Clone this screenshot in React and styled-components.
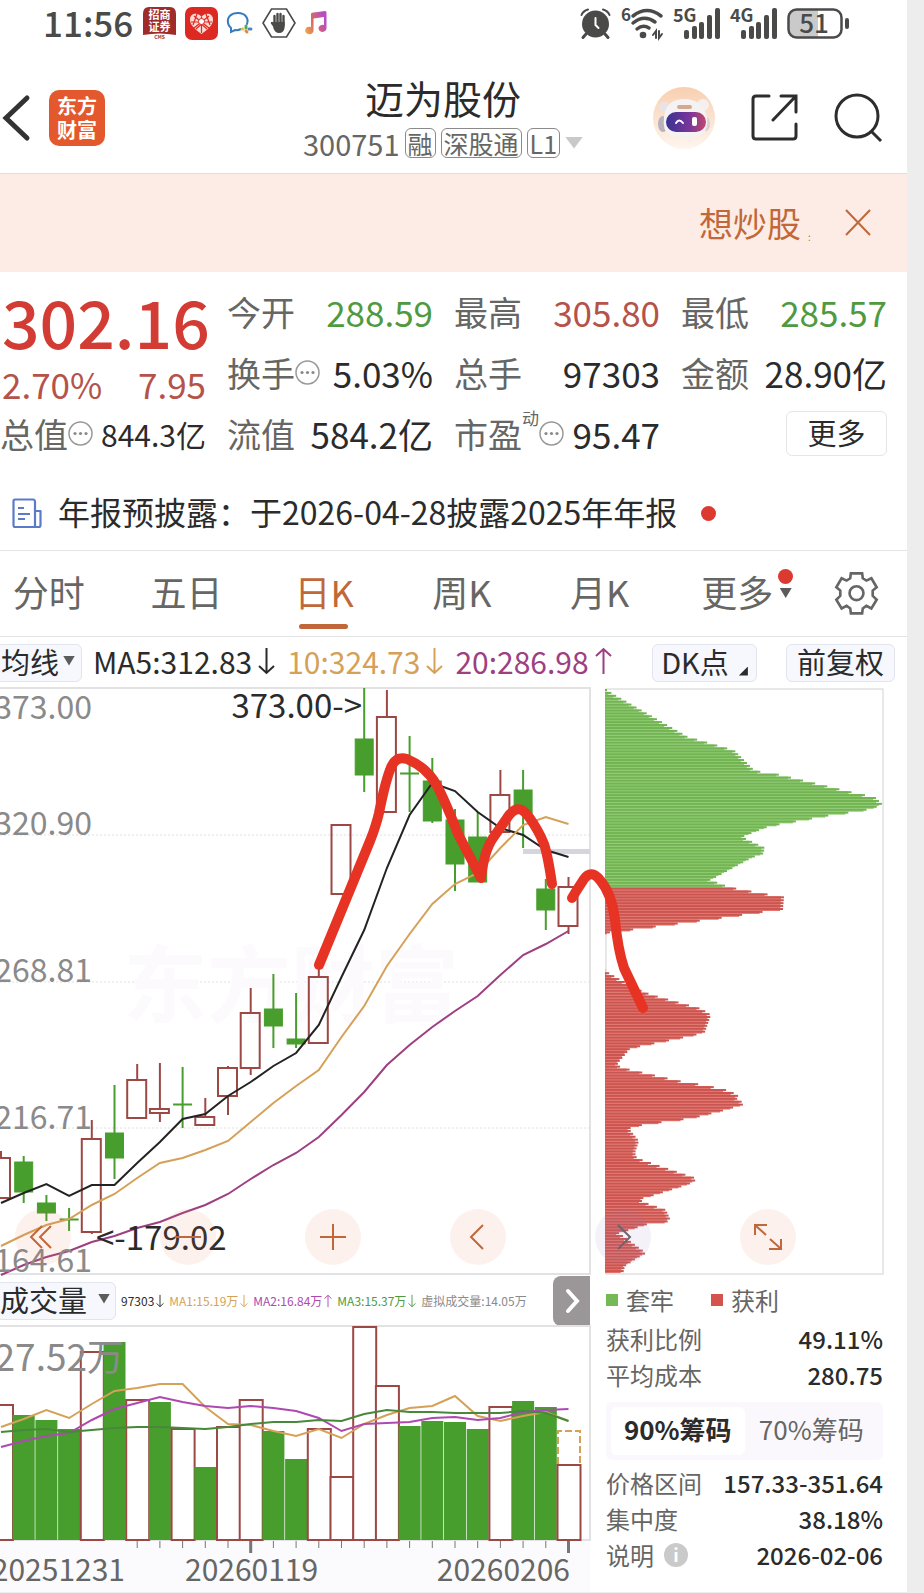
import React from "react"
import styled, { createGlobalStyle, css } from "styled-components"

const colors = {
  ink: "#2b2b2b",
  gray: "#666664",
  muted: "#8a8a8a",
  up: "#b5524a",
  upStrong: "#d23c34",
  down: "#4f9a41",
  candleGreen: "#479e2c",
  candleRed: "#9c4844",
  accent: "#c0683a",
  gold: "#d5a158",
  plum: "#9d3f81",
  violet: "#ad49b0",
  line: "#e4e4e6",
}

const GlobalStyle = createGlobalStyle`
  * {
    box-sizing: border-box;
  }
  body {
    margin: 0;
    background: #ededed;
    color: ${colors.ink};
    font-family: "Noto Sans CJK SC", "Noto Sans", sans-serif;
  }
  button,
  select {
    padding: 0;
    border: 0;
    background: none;
    color: inherit;
    font: inherit;
    cursor: pointer;
  }
  dl,
  dd,
  h1,
  p {
    margin: 0;
    font-weight: 400;
  }
  svg {
    display: block;
    flex: none;
    overflow: visible;
  }
`

const Screen = styled.main`
  margin-right: 17px; // gray gutter on the right side
  background: #fff;
`

/* status bar */
const StatusBar = styled.div`
  display: flex;
  align-items: center;
  gap: 9px;
  height: 46px;
  padding: 0 58px 0 43px;
  color: #4a4b49;
`
const Clock = styled.span`
  margin-right: 1px;
  padding-bottom: 2px;
  font-size: 35px;
  line-height: 44px;
  font-weight: 500;
`
const StatusRight = styled.div`
  display: flex;
  align-items: center;
  gap: 10px;
  margin-left: auto;
`

/* header */
const Header = styled.header`
  display: grid;
  grid-template-columns: 1fr auto 1fr;
  align-items: center;
  height: 128px;
  padding: 16px 24px 0 3px;
  border-bottom: 1px solid #e6dcdc;
`
const HeaderSide = styled.div`
  display: flex;
  align-items: center;
  justify-content: ${props => (props.$end ? "flex-end" : "flex-start")};
  gap: ${props => (props.$end ? "36px" : "19px")};
`
const Logo = styled.a`
  display: grid;
  place-content: center;
  width: 56px;
  height: 56px;
  border-radius: 10px;
  background: #e3582c;
  color: #fff;
  font-size: 20px;
  font-weight: 700;
  line-height: 24px;
  text-decoration: none;
`
const Title = styled.h1`
  font-size: 39px;
  line-height: 50px;
  text-align: center;
`
const SubTitle = styled.div`
  display: flex;
  align-items: center;
  gap: 5px;
  height: 42px;
  color: ${colors.gray};
  font-size: 29px;
  line-height: 42px;
`
const Tag = styled.span`
  padding: 0 2px;
  border: 1px solid #8a8a8a;
  border-radius: 6px;
  font-size: 25px;
  line-height: 28px;
`
const Caret = styled.span`
  width: ${props => props.$w}px;
  height: ${props => props.$h}px;
  flex: none;
  background: ${props => props.$color || "#5c5c5c"};
  clip-path: polygon(0 0, 100% 0, 50% 100%);
  pointer-events: none;
`

const Banner = styled.div`
  display: flex;
  align-items: center;
  justify-content: flex-end;
  height: 98px;
  padding-right: 35px;
  background: #fcece5;
  color: ${colors.accent};
  font-size: 34px;
  line-height: 50px;
`
const BannerTail = styled.span`
  width: 43px;
  padding-left: 7px;
  font-size: 10px;
  line-height: 10px;
  align-self: flex-end;
  margin-bottom: 30px;
`

/* quote */
const Quote = styled.dl`
  display: grid;
  grid-template-columns: repeat(4, minmax(0, 1fr));
  grid-template-rows: repeat(3, 61px);
  column-gap: 21px;
  padding: 9px 20px 13px 0;
`
const PriceBox = styled.div`
  grid-row: span 2;
  display: flex;
  flex-direction: column;
  padding-left: 2px;
`
const Price = styled.span`
  color: ${colors.upStrong};
  font-size: 66px;
  font-weight: 500;
  line-height: 78px;
`
const Change = styled.span`
  display: flex;
  justify-content: space-between;
  color: ${colors.up};
  font-size: 35px;
  line-height: 50px;
`
const QuoteCell = styled.div`
  display: flex;
  align-items: center;
  white-space: nowrap;
`
const QuoteLabel = styled.dt`
  display: flex;
  align-items: center;
  color: ${colors.gray};
  font-size: 34px;
  line-height: 50px;
`
const QuoteValue = styled.dd`
  margin-left: auto;
  color: ${props => props.$color || colors.ink};
  font-size: ${props => (props.$small ? 30 : 35)}px;
  line-height: 50px;
`
const Sup = styled.sup`
  align-self: flex-start;
  font-size: 17px;
  line-height: 18px;
`
const MoreButton = styled.button`
  width: 101px;
  height: 45px;
  margin-left: auto;
  padding-bottom: 3px;
  border: 1px solid #e6e6e6;
  border-radius: 6px;
  font-size: 29px;
  line-height: 40px;
`

const Notice = styled.a`
  display: flex;
  align-items: center;
  height: 74px;
  padding: 0 12px;
  border-bottom: 1px solid ${colors.line};
  color: ${colors.ink};
  font-size: 32px;
  line-height: 50px;
  text-decoration: none;
`
const NoticeText = styled.span`
  margin: 0 24px 0 16px;
  padding-bottom: 5px;
`
const Dot = styled.span`
  width: 15px;
  height: 15px;
  border-radius: 50%;
  background: #dc3a30;
`

/* period tabs */
const Tabs = styled.nav`
  display: flex;
  height: 86px;
  border-bottom: 1px solid ${colors.line};
`
const TabList = styled.div`
  display: flex;
  flex: 1;
  margin-left: -20px;
`
const Tab = styled.button`
  position: relative;
  flex: 1;
  padding-bottom: 5px;
  color: ${props => (props.$active ? colors.accent : colors.gray)};
  font-size: 36px;
  line-height: 50px;
  ${props =>
    props.$active &&
    css`
      &::after {
        content: "";
        position: absolute;
        left: calc(50% - 25px);
        bottom: 7px;
        width: 49px;
        height: 5px;
        border-radius: 3px;
        background: ${colors.accent};
      }
    `}
`
// red dot and arrow hang over the corner of the last tab
const TabBadge = styled.span`
  position: absolute;
  top: 18px;
  left: calc(50% + 41px);
  display: flex;
  flex-direction: column;
  align-items: center;
  gap: 4px;
`
const GearButton = styled.button`
  display: grid;
  place-items: center;
  width: 101px;
`

/* indicator bar */
const IndicatorBar = styled.div`
  display: flex;
  align-items: center;
  height: 51px;
  padding-right: 12px;
  font-size: 29px;
  line-height: 36px;
`
const chip = css`
  display: flex;
  align-items: center;
  height: 38px;
  padding-bottom: 4px;
  border: 1px solid #e2e4ee;
  border-radius: 6px;
  background: #f6f8fe;
`
const Picker = styled.label`
  ${chip}
  gap: ${props => props.$gap}px;
  width: ${props => props.$width}px;
  margin-left: -4px;
  padding-left: ${props => props.$pad}px;
  font-size: 29px;
  select {
    appearance: none;
    line-height: 34px;
    height: 34px;
  }
`
const Chip = styled.button`
  ${chip}
  justify-content: center;
  width: ${props => props.$width}px;
  margin-left: ${props => (props.$push ? "auto" : "29px")};
`
const Corner = styled.span`
  align-self: flex-end;
  width: 9px;
  height: 9px;
  margin: 0 0 1px 10px;
  background: ${colors.ink};
  clip-path: polygon(100% 0, 100% 100%, 0 100%);
`
const Averages = styled.div`
  display: flex;
  gap: 12px;
  margin-left: 11px;
  padding-bottom: 4px;
  font-size: 30px;
`
const Average = styled.span`
  display: flex;
  align-items: center;
  gap: 6px;
  color: ${props => props.$color};
`

/* charts */
const ChartRow = styled.section`
  position: relative;
  display: grid;
  grid-template-columns: 590fr 278fr;
  column-gap: 15px;
  padding-right: 24px;
`
const Plot = styled.svg`
  width: 100%;
  height: auto;
  overflow: visible;
  font-family: inherit;
`
// hand drawn stroke lies over both charts
const Scribble = styled.svg`
  position: absolute;
  inset: 0;
  width: 100%;
  height: 100%;
  pointer-events: none;
`
const ChartTools = styled.div`
  position: absolute;
  left: 15px;
  bottom: 10px;
  display: flex;
  gap: 89px;
`
const RoundButton = styled.button`
  display: grid;
  place-items: center;
  width: 56px;
  height: 56px;
  border-radius: 50%;
  background: ${props =>
    props.$cool ? "rgba(150, 120, 190, 0.1)" : "rgba(240, 120, 80, 0.1)"};
`
const VolumeBar = styled.div`
  display: flex;
  align-items: center;
  gap: 5px;
  height: 51px;
  font-size: 12px;
  line-height: 20px;
  white-space: nowrap;
`
const VolumeItem = styled.span`
  display: flex;
  align-items: center;
  gap: 2px;
  color: ${props => props.$color};
`
const ExpandButton = styled.button`
  display: grid;
  place-items: center;
  width: 37px;
  height: 50px;
  margin-left: auto;
  border-radius: 8px 0 0 8px;
  background: #9b9798;
`

/* chip statistics */
const Stats = styled.div`
  padding-left: 1px;
  font-size: 24px;
  line-height: 36px;
  color: ${colors.gray};
`
const Legend = styled.div`
  display: flex;
  gap: 37px;
  padding: 7px 0 3px;
`
const LegendItem = styled.span`
  display: flex;
  align-items: center;
  gap: 8px;
  &::before {
    content: "";
    width: 12px;
    height: 12px;
    background: ${props => props.$color};
  }
`
const StatList = styled.dl``
const StatRow = styled.div`
  display: flex;
  justify-content: space-between;
  dt {
    display: flex;
    align-items: center;
    gap: 10px;
  }
  dd {
    color: ${colors.ink};
    font-weight: 500;
  }
`
const Segmented = styled.div`
  display: flex;
  height: 58px;
  margin: 9px 0 5px;
  padding: 5px;
  border-radius: 6px;
  background: #faf8fd;
`
const Segment = styled.button`
  flex: 1;
  padding-bottom: 5px;
  border-radius: 6px;
  background: ${props => (props.$active ? "#fff" : "none")};
  color: ${props => (props.$active ? colors.ink : colors.gray)};
  font-size: 26px;
  font-weight: ${props => (props.$active ? 700 : 400)};
  line-height: 40px;
`
const Info = styled.span`
  width: 24px;
  height: 24px;
  border-radius: 50%;
  background: #c9cac9;
  color: #fff;
  font-size: 18px;
  font-weight: 700;
  line-height: 23px;
  text-align: center;
`

const STEP = 227 / 10
const cx = i => 1 + i * STEP

// [rising, high, top, bottom, low]
const candles = [
  [1, 463, 470, 510, 510],
  [0, 468, 474, 504, 515],
  [0, 507, 515, 525, 533],
  [0, 520, 531, 532, 543],
  [1, 432, 451, 544, 546],
  [0, 397, 445, 470, 491],
  [1, 376, 392, 430, 430],
  [1, 375, 421, 425, 434],
  [0, 379, 416, 417, 440],
  [1, 410, 429, 437, 437],
  [1, 378, 380, 408, 427],
  [1, 300, 325, 380, 387],
  [0, 286, 321, 338, 360],
  [0, 305, 351, 356, 360],
  [1, 276, 289, 355, 355],
  [1, 137, 137, 206, 206],
  [0, 0, 51, 87, 104],
  [1, 2, 29, 124, 124],
  [0, 48, 85, 86, 124],
  [0, 70, 93, 133, 135],
  [0, 121, 132, 176, 203],
  [0, 124, 149, 194, 194],
  [1, 82, 107, 144, 144],
  [0, 82, 102, 125, 160],
  [0, 191, 201, 222, 242],
  [1, 189, 199, 238, 246],
]
const ma5 = [515, 505, 496, 508, 497, 497, 475, 454, 431, 426, 408, 394, 378, 365, 337, 289, 242, 180, 127, 95, 103, 124, 140, 147, 162, 169]
const ma10 = [558, 547, 537, 531, 517, 506, 490, 475, 470, 462, 453, 434, 415, 398, 382, 349, 318, 278, 246, 216, 196, 185, 160, 137, 129, 136]
const ma20 = [587, 577, 569, 563, 554, 548, 540, 534, 525, 517, 506, 491, 477, 465, 449, 427, 404, 377, 357, 339, 323, 308, 287, 267, 256, 243]

// [rising, top]
const volumes = [
  [1, 78], [0, 89], [0, 94], [0, 103], [1, 25], [0, 16], [1, 73], [0, 76], [1, 102],
  [0, 141], [1, 100], [1, 73], [0, 105], [0, 133], [1, 102], [1, 150], [1, 0], [1, 59],
  [0, 100], [0, 95], [0, 96], [0, 103], [1, 80], [0, 75], [0, 81], [1, 138],
]
const vma1 = [101, 93, 84, 92, 78, 65, 62, 58, 58, 81, 98, 99, 105, 110, 103, 112, 98, 89, 82, 80, 70, 90, 95, 90, 86, 95]
const vma2 = [121, 115, 110, 107, 94, 83, 77, 71, 76, 80, 82, 80, 82, 85, 92, 105, 98, 97, 96, 92, 91, 94, 92, 86, 84, 83]
const vma3 = [106, 104, 103, 106, 104, 102, 101, 101, 102, 103, 101, 98, 96, 96, 94, 95, 88, 84, 86, 86, 87, 87, 87, 85, 87, 95]

// chip distribution outline: [y, width]
const chips = [
  [2, 2], [6, 8], [49, 83], [60, 121], [63, 130], [83, 150], [86, 171], [106, 254], [109, 270],
  [117, 278], [123, 257], [126, 232], [135, 182], [138, 165], [146, 144], [149, 137], [160, 160],
  [166, 158], [169, 148], [189, 111], [192, 105], [198, 121], [201, 133], [206, 160], [209, 179],
  [221, 178], [224, 157], [230, 115], [241, 32], [244, 6], [246, 0], [282, 0], [284, 2], [292, 16],
  [304, 39], [307, 47], [321, 97], [327, 106], [344, 100], [347, 90], [352, 66], [358, 36], [361, 25],
  [375, 13], [378, 13], [381, 22], [384, 35], [393, 74], [398, 104], [402, 121], [407, 134], [410, 131],
  [416, 140], [422, 120], [430, 88], [433, 65], [436, 43], [439, 26], [442, 25], [453, 34], [465, 30],
  [470, 32], [473, 40], [491, 93], [496, 84], [508, 46], [511, 35], [514, 38], [522, 61], [533, 66],
  [536, 43], [542, 24], [545, 14], [551, 22], [565, 41], [570, 32], [578, 20], [586, 18],
]
const chipWidth = y => {
  const k = chips.findIndex(point => point[0] >= y)
  if (k < 1) return chips[0][1]
  const [y0, w0] = chips[k - 1]
  const [y1, w1] = chips[k]
  return w0 + ((w1 - w0) * (y - y0)) / (y1 - y0)
}
const chipRows = Array.from({ length: 200 }, (_, i) => 1 + i * 2.92)

const linePoints = values => values.map((y, i) => `${cx(i)},${y}`).join(" ")

const Line = ({ values, color, width = 2 }) => (
  <polyline points={linePoints(values)} fill="none" stroke={color} strokeWidth={width} />
)

const CandleChart = () => (
  <Plot viewBox="0 0 590 587" role="img" aria-label="日K">
    <path d="M0 0H590V586H0" fill="none" stroke="#e2e2e5" strokeWidth="2" />
    {[147, 294, 440].map(y => (
      <line key={y} x1="0" x2="590" y1={y} y2={y} stroke="#e0e0e0" strokeDasharray="2 2" />
    ))}
    <text x="123" y="328" fontSize="84" fontWeight="700" fill="#fcfafd">
      东方财富
    </text>
    <rect x="523" y="161" width="67" height="5" fill="#d5d5de" />
    {candles.map(([rising, high, top, bottom, low], i) => (
      <g key={i} stroke={rising ? colors.candleRed : colors.candleGreen} strokeWidth="2">
        <line x1={cx(i)} x2={cx(i)} y1={high} y2={top} />
        <line x1={cx(i)} x2={cx(i)} y1={bottom} y2={low} />
        {rising ? (
          <rect x={cx(i) - 10} y={top} width="19" height={bottom - top} fill="none" />
        ) : (
          <rect x={cx(i) - 9} y={top} width="18" height={bottom - top} fill={colors.candleGreen} strokeWidth="1" />
        )}
      </g>
    ))}
    <Line values={ma5} color="#232323" />
    <Line values={ma10} color={colors.gold} />
    <Line values={ma20} color={colors.plum} />
    <g fontSize="32" fill={colors.muted} textAnchor="end">
      <text x="92" y="31">373.00</text>
      <text x="92" y="147">320.90</text>
      <text x="92" y="294">268.81</text>
      <text x="92" y="441">216.71</text>
      <text x="92" y="584">164.61</text>
    </g>
    <g fontSize="33" fill={colors.ink}>
      <text x="362" y="30" textAnchor="end">373.00-&gt;</text>
      <text x="96" y="562">&lt;-179.02</text>
    </g>
  </Plot>
)

const ChipChart = () => (
  <Plot viewBox="0 0 278 587" role="img" aria-label="筹码分布">
    <rect x="1" y="1" width="277" height="585" fill="none" stroke="#d2d2d4" strokeWidth="1" />
    {chipRows.map(y => {
      const green = y < 197
      const width = chipWidth(y + 1)
      return width > 0 ? (
        <g key={y}>
          <rect y={y} width={Math.max(width - 3, 0)} height="3" fill={green ? "#91cd70" : "#e5766e"} />
          <rect y={y} width={width} height="2" fill={green ? "#72b354" : "#cb5550"} />
        </g>
      ) : null
    })}
  </Plot>
)

const VolumeChart = () => (
  <Plot viewBox="0 0 590 266" role="img" aria-label="成交量">
    <rect y="215" width="590" height="51" fill="#fbfafd" />
    <path d="M0 0H590V214H0" fill="none" stroke="#e2e2e5" strokeWidth="2" />
    {volumes.map(([rising, top], i) =>
      rising ? (
        <rect key={i} x={cx(i) - 11} y={top + 1} width="23" height={213 - top} fill="#fff" stroke={colors.candleRed} strokeWidth="2" />
      ) : (
        <rect key={i} x={cx(i) - 11} y={top} width="22" height={214 - top} fill={colors.candleGreen} />
      )
    )}
    <path d="M558 138V105H580V138" fill="none" stroke={colors.gold} strokeWidth="2" strokeDasharray="7 3" />
    <Line values={vma1} color={colors.gold} />
    <Line values={vma2} color={colors.violet} />
    <Line values={vma3} color="#47883a" />
    {candles.map((_, i) => {
      const major = i === 11 || i === 25
      return i > 5 ? (
        <line key={i} x1={cx(i)} x2={cx(i)} y1="215" y2={major ? 227 : 222} stroke="#777" strokeWidth={major ? 3 : 1} />
      ) : null
    })}
    <text x="124" y="45" fontSize="37" fill={colors.muted} textAnchor="end">27.52万</text>
    <g fontSize="30" fill={colors.gray}>
      <text x="125" y="255" textAnchor="end">20251231</text>
      <text x="185" y="255">20260119</text>
      <text x="570" y="255" textAnchor="end">20260206</text>
    </g>
  </Plot>
)

const Arrow = ({ up, width = 17, height = 28 }) => (
  <svg width={width} height={height} viewBox="0 0 17 28" fill="none" stroke="currentColor" strokeWidth="2">
    <path d={up ? "M8.500 27V2M1 9L8.500 2L16 9" : "M8.500 1V26M1 19L8.500 26L16 19"} />
  </svg>
)

const More = () => (
  <svg width="25" height="25" viewBox="0 0 25 25" fill="none" stroke="#999" strokeWidth="1.500">
    <circle cx="12.500" cy="12.500" r="11.500" />
    <g fill="#8a8a8a" stroke="none">
      <circle cx="7" cy="12.500" r="1.600" />
      <circle cx="12.500" cy="12.500" r="1.600" />
      <circle cx="18" cy="12.500" r="1.600" />
    </g>
  </svg>
)

const BrokerIcon = () => (
  <svg width="33" height="33" viewBox="0 0 33 33">
    <path d="M6 0H27Q33 0 33 7V28Q16 25 0 28V7Q0 0 6 0Z" fill="#a02c2a" />
    <g fill="#fff" fontSize="11" fontWeight="700" textAnchor="middle">
      <text x="16.500" y="12">招商</text>
      <text x="16.500" y="24">证券</text>
    </g>
    <text x="16.500" y="32" fill="#a02c2a" fontSize="5" fontWeight="700" textAnchor="middle">CMS</text>
  </svg>
)

const HeartIcon = () => (
  <svg width="33" height="33" viewBox="0 0 33 33">
    <rect width="33" height="33" rx="7" fill="#dc2a22" />
    <path d="M16.500 27C10 22 5 18 5 12.500C5 6 13 5 16.500 10C20 5 28 6 28 12.500C28 18 23 22 16.500 27Z" fill="#f9dad4" />
    <path d="M9 9L24 21M24 9L9 21M16.500 10V26M6 15H27M12 7L8 18M21 7L25 18M11 22L16.500 17L22 22" stroke="#dc2a22" strokeWidth="1.200" fill="none" />
    <circle cx="16.500" cy="14.500" r="3" fill="#fff" stroke="#dc2a22" />
  </svg>
)

const ChatIcon = () => (
  <svg width="26" height="22" viewBox="0 0 26 22" fill="none" strokeWidth="2" strokeLinecap="round">
    <path d="M20 12C22 6 18 1 11 1C4 1 0 5 1 11C1.500 14 4 16 4 16L4 20L8 18C10 18.500 12 18 14 17" stroke="#3a7bbd" />
    <path d="M19 14V16" stroke="#58a55c" strokeWidth="3" />
    <path d="M24 17H22" stroke="#4a86c8" strokeWidth="3" />
    <path d="M20 20L19 19" stroke="#e08a3c" strokeWidth="3" />
    <path d="M15 17H16" stroke="#eac23f" strokeWidth="3" />
  </svg>
)

const HandIcon = () => (
  <svg width="34" height="30" viewBox="0 0 34 30">
    <path d="M9.500 1H24.500L33 15L24.500 29H9.500L1 15Z" fill="none" stroke="#4a4b49" strokeWidth="1.600" />
    <path d="M12.500 8V17M15.500 6V16M18.500 6V16M21.500 8V17M10 15L13 19" stroke="#4a4b49" strokeWidth="2.400" strokeLinecap="round" />
    <path d="M11.300 14H22.700V19Q22 25 17 25Q13 25 11.300 20Z" fill="#4a4b49" />
  </svg>
)

const MusicIcon = () => (
  <svg width="22" height="24" viewBox="0 0 22 24">
    <defs>
      <linearGradient id="note" x1="0" y1="1" x2="1" y2="0.600">
        <stop offset="0" stopColor="#eeb04d" />
        <stop offset="0.500" stopColor="#d9695c" />
        <stop offset="1" stopColor="#b64fc4" />
      </linearGradient>
    </defs>
    <path
      d="M6 3Q6 2 7 1.800L20 0Q21.500 0 21.500 1.500V17A4 3.600 0 1 1 19 14V6L8.500 7.500V19A4.200 3.800 0 1 1 6 16Z"
      fill="url(#note)"
    />
  </svg>
)

const AlarmIcon = () => (
  <svg width="31" height="31" viewBox="0 0 31 31" fill="none" stroke="#4a4b49" strokeLinecap="round">
    <circle cx="15.500" cy="16" r="13.500" fill="#4a4b49" stroke="none" />
    <path d="M1.500 7Q3 3 8 1.500M29.500 7Q28 3 23 1.500" strokeWidth="2" />
    <path d="M6 26L3 29.500M25 26L28 29.500" strokeWidth="3" />
    <path d="M15.500 10V17L18.500 20" stroke="#fff" strokeWidth="2" />
  </svg>
)

const WifiIcon = () => (
  <svg width="42" height="33" viewBox="0 0 42 33" fill="none" stroke="#4a4b49" strokeLinecap="round">
    <text x="0" y="14" fontSize="17" fontWeight="700" fill="#4a4b49" stroke="none">6</text>
    <path d="M12 9Q26 -2 40 9" strokeWidth="3.500" />
    <path d="M12 16Q23 7 34 15" strokeWidth="3.500" />
    <path d="M16 22Q22 17 28 21" strokeWidth="3.500" />
    <circle cx="22" cy="28" r="3.300" fill="#4a4b49" stroke="none" />
    <path d="M35 31V24L32 28M38 24V31L41 27" strokeWidth="2" />
  </svg>
)

const SignalIcon = ({ label }) => (
  <svg width="47" height="32" viewBox="0 0 47 32" fill="#4a4b49">
    <text x="0" y="15" fontSize="18" fontWeight="700">{label}</text>
    <rect x="11" y="23" width="5" height="9" rx="2" />
    <rect x="19" y="19" width="5" height="13" rx="2" />
    <rect x="26" y="15" width="5" height="17" rx="2" />
    <rect x="34" y="8" width="5" height="24" rx="2" />
    <rect x="42" y="1" width="5" height="31" rx="2" />
  </svg>
)

const BatteryIcon = () => (
  <svg width="62" height="31" viewBox="0 0 62 31">
    <path d="M8 2H31V29H8Q2 29 2 23V8Q2 2 8 2Z" fill="#c9cac9" />
    <rect x="1.500" y="1.500" width="53" height="28" rx="8" fill="none" stroke="#4a4b49" strokeWidth="2.500" />
    <rect x="58" y="10" width="4" height="11" rx="2" fill="#4a4b49" />
    <text x="27" y="25" fontSize="26" fontWeight="500" fill="#4a4b49" textAnchor="middle">51</text>
  </svg>
)

const BackIcon = () => (
  <svg width="27" height="46" viewBox="0 0 27 46" fill="none" stroke="#333" strokeWidth="5" strokeLinecap="round">
    <path d="M24 3L3 23L24 43" />
  </svg>
)

const RobotIcon = () => (
  <svg width="62" height="62" viewBox="0 0 62 62">
    <defs>
      <linearGradient id="halo" x1="0" y1="0" x2="0" y2="1">
        <stop offset="0" stopColor="#f8cfb0" />
        <stop offset="1" stopColor="#fef6f0" />
      </linearGradient>
      <linearGradient id="visor">
        <stop offset="0" stopColor="#3a3294" />
        <stop offset="0.600" stopColor="#7a3799" />
        <stop offset="1" stopColor="#c2466a" />
      </linearGradient>
    </defs>
    <circle cx="31" cy="31" r="31" fill="url(#halo)" />
    <circle cx="11" cy="20" r="5" fill="#e9e3e6" />
    <circle cx="50" cy="18" r="6" fill="#f6efef" />
    <ellipse cx="10" cy="37" rx="5" ry="8" fill="#b9b2bb" />
    <ellipse cx="53" cy="37" rx="4" ry="7" fill="#d9ced4" />
    <path d="M11 30Q13 12 31 12Q49 12 54 30Q56 46 44 49Q30 52 17 48Q9 44 11 30Z" fill="#f5f2f4" />
    <rect x="24" y="18" width="15" height="4" rx="2" fill="#d4a98e" />
    <rect x="13" y="25" width="40" height="20" rx="10" fill="url(#visor)" />
    <path d="M23 36Q26 31 30 36" fill="none" stroke="#fff" strokeWidth="2" strokeLinecap="round" />
    <rect x="39" y="30" width="5" height="9" rx="2" fill="#fff" />
  </svg>
)

const ShareIcon = () => (
  <svg width="47" height="47" viewBox="0 0 47 47" fill="none" stroke="#2d2d2d" strokeWidth="3" strokeLinecap="round">
    <path d="M18 2H5Q2 2 2 5V42Q2 45 5 45H42Q45 45 45 42V30M30 2H45V18M44 3L22 26" />
  </svg>
)

const SearchIcon = () => (
  <svg width="49" height="49" viewBox="0 0 49 49" fill="none" stroke="#2d2d2d" strokeWidth="3">
    <circle cx="23" cy="23" r="21" />
    <path d="M37 38L47 48" />
  </svg>
)

const ReportIcon = () => (
  <svg width="30" height="31" viewBox="0 0 30 31" fill="none" stroke="#5b7bc9" strokeWidth="2.200" strokeLinejoin="round">
    <path d="M23 29V4Q23 1.500 21 1.500H3Q1.500 1.500 1.500 3V27Q1.500 29 3 29H27Q28.500 29 28.500 27V13H23M6 10H12M6 16H18M6 21H13" />
  </svg>
)

const GearIcon = () => (
  <svg width="43" height="43" viewBox="0 0 130 130" fill="none" stroke="#666664" strokeWidth="8">
    <path d="M48 4L82 4L84 19L95 26L110 19L126 46L114 56V72L126 84L110 110L95 102L84 110L82 125H48L46 110L35 102L20 110L4 84L16 72V56L4 46L20 19L35 26L46 19Z" />
    <circle cx="65" cy="64" r="21" />
  </svg>
)

const ToolIcon = ({ d, color = colors.accent }) => (
  <svg width="28" height="28" viewBox="0 0 28 28" fill="none" stroke={color} strokeWidth="2">
    <path d={d} />
  </svg>
)

const tools = [
  ["快退", "M13 3L2 14L13 25M22 3L11 14L22 25"],
  ["缩小", "M1 14H27"],
  ["放大", "M1 14H27M14 1V27"],
  ["左移", "M19 2L7 14L19 26"],
  ["右移", "M9 2L21 14L9 26", "#6d6470"],
  ["全屏", "M1 12V2H13M2 3L12 12M27 16V26H15M26 25L16 16"],
]

const quotes = [
  { label: "今开", value: "288.59", color: colors.down },
  { label: "最高", value: "305.80", color: colors.up },
  { label: "最低", value: "285.57", color: colors.down },
  { label: "换手", value: "5.03%", more: true },
  { label: "总手", value: "97303" },
  { label: "金额", value: "28.90亿" },
  { label: "总值", value: "844.3亿", more: true, small: true },
  { label: "流值", value: "584.2亿" },
  { label: "市盈", value: "95.47", sup: "动", more: true },
]

const tabs = ["分时", "五日", "日K", "周K", "月K", "更多"]

const Stat = ({ label, value, info }) => (
  <StatRow>
    <dt>
      {label}
      {info && <Info>i</Info>}
    </dt>
    <dd>{value}</dd>
  </StatRow>
)

const App = () => (
  <>
    <GlobalStyle />
    <Screen>
      <StatusBar>
        <Clock>11:56</Clock>
        <BrokerIcon />
        <HeartIcon />
        <ChatIcon />
        <HandIcon />
        <MusicIcon />
        <StatusRight>
          <AlarmIcon />
          <WifiIcon />
          <SignalIcon label="5G" />
          <SignalIcon label="4G" />
          <BatteryIcon />
        </StatusRight>
      </StatusBar>

      <Header>
        <HeaderSide>
          <button aria-label="返回">
            <BackIcon />
          </button>
          <Logo href="#home">
            <span>东方</span>
            <span>财富</span>
          </Logo>
        </HeaderSide>
        <div>
          <Title>迈为股份</Title>
          <SubTitle>
            300751
            <Tag>融</Tag>
            <Tag>深股通</Tag>
            <Tag>L1</Tag>
            <Caret $w={18} $h={12} $color="#c8c9c8" />
          </SubTitle>
        </div>
        <HeaderSide $end>
          <button aria-label="助手">
            <RobotIcon />
          </button>
          <button aria-label="分享">
            <ShareIcon />
          </button>
          <button aria-label="搜索">
            <SearchIcon />
          </button>
        </HeaderSide>
      </Header>

      <Banner>
        想炒股
        <BannerTail>:</BannerTail>
        <button aria-label="关闭">
          <ToolIcon d="M2 1L26 26M26 1L2 26" />
        </button>
      </Banner>

      <Quote>
        <PriceBox>
          <Price>302.16</Price>
          <Change>
            <span>2.70%</span>
            <span>7.95</span>
          </Change>
        </PriceBox>
        {quotes.map(item => (
          <QuoteCell key={item.label}>
            <QuoteLabel>
              {item.label}
              {item.sup && <Sup>{item.sup}</Sup>}
              {item.more && <More />}
            </QuoteLabel>
            <QuoteValue $color={item.color} $small={item.small}>
              {item.value}
            </QuoteValue>
          </QuoteCell>
        ))}
        <QuoteCell>
          <MoreButton>更多</MoreButton>
        </QuoteCell>
      </Quote>

      <Notice href="#report">
        <ReportIcon />
        <NoticeText>年报预披露：于2026-04-28披露2025年年报</NoticeText>
        <Dot />
      </Notice>

      <Tabs>
        <TabList>
          {tabs.map(tab => (
            <Tab key={tab} $active={tab === "日K"}>
              {tab}
              {tab === "更多" && (
                <TabBadge>
                  <Dot />
                  <Caret $w={12} $h={10} />
                </TabBadge>
              )}
            </Tab>
          ))}
        </TabList>
        <GearButton aria-label="设置">
          <GearIcon />
        </GearButton>
      </Tabs>

      <IndicatorBar>
        <Picker $width={86} $pad={4} $gap={3}>
          <select aria-label="指标">
            <option>均线</option>
          </select>
          <Caret $w={12} $h={10} />
        </Picker>
        <Averages>
          <Average $color={colors.ink}>
            MA5:312.83
            <Arrow />
          </Average>
          <Average $color={colors.gold}>
            10:324.73
            <Arrow />
          </Average>
          <Average $color={colors.plum}>
            20:286.98
            <Arrow up />
          </Average>
        </Averages>
        <Chip $width={105} $push>
          DK点
          <Corner />
        </Chip>
        <Chip $width={109}>前复权</Chip>
      </IndicatorBar>

      <ChartRow>
        <CandleChart />
        <ChipChart />
        <ChartTools>
          {tools.map(([label, d, color]) => (
            <RoundButton key={label} aria-label={label} $cool={Boolean(color)}>
              <ToolIcon d={d} color={color} />
            </RoundButton>
          ))}
        </ChartTools>
        <Scribble viewBox="0 0 907 587" fill="none" stroke="#e73323" strokeWidth="10" strokeLinecap="round" strokeLinejoin="round">
          <path d="M319 277L370 153Q376 138 379 125Q385 95 390 82Q395 67 407 71Q426 79 436 96Q444 110 458 146L481 190Q484 163 493 150L507 130Q518 113 529 129Q539 143 544 156Q548 168 552 196" />
          <path d="M572 210Q578 200 584 191Q591 181 600 192Q612 206 615 232Q618 262 624 280L643 320" />
        </Scribble>
      </ChartRow>

      <ChartRow>
        <div>
          <VolumeBar>
            <Picker $width={120} $pad={3} $gap={10}>
              <select aria-label="副图">
                <option>成交量</option>
              </select>
              <Caret $w={12} $h={10} />
            </Picker>
            <VolumeItem $color={colors.ink}>
              97303
              <Arrow width={8} height={18} />
            </VolumeItem>
            <VolumeItem $color={colors.gold}>
              MA1:15.19万
              <Arrow width={8} height={18} />
            </VolumeItem>
            <VolumeItem $color={colors.violet}>
              MA2:16.84万
              <Arrow up width={8} height={18} />
            </VolumeItem>
            <VolumeItem $color={colors.down}>
              MA3:15.37万
              <Arrow width={8} height={18} />
            </VolumeItem>
            <VolumeItem $color={colors.muted}>虚拟成交量:14.05万</VolumeItem>
            <ExpandButton aria-label="展开">
              <svg width="16" height="24" viewBox="0 0 16 24" fill="none" stroke="#fff" strokeWidth="4" strokeLinecap="round">
                <path d="M4 2L13 12L4 22" />
              </svg>
            </ExpandButton>
          </VolumeBar>
          <VolumeChart />
        </div>
        <Stats>
          <Legend>
            <LegendItem $color="#75b957">套牢</LegendItem>
            <LegendItem $color="#d4544d">获利</LegendItem>
          </Legend>
          <StatList>
            <Stat label="获利比例" value="49.11%" />
            <Stat label="平均成本" value="280.75" />
          </StatList>
          <Segmented>
            <Segment $active>90%筹码</Segment>
            <Segment>70%筹码</Segment>
          </Segmented>
          <StatList>
            <Stat label="价格区间" value="157.33-351.64" />
            <Stat label="集中度" value="38.18%" />
            <Stat label="说明" value="2026-02-06" info />
          </StatList>
        </Stats>
      </ChartRow>
    </Screen>
  </>
)

export default App
